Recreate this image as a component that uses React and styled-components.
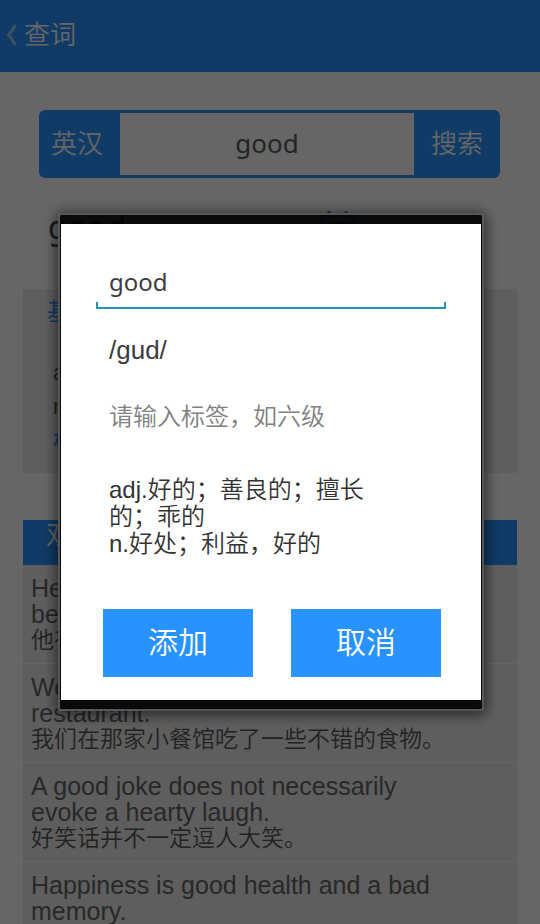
import React, { useState } from "react";
import styled, { createGlobalStyle } from "styled-components";

const BLUE = "#2893ff";
const HEI = '"Liberation Sans", "Noto Sans CJK SC", sans-serif';
const SANS = '"Noto Sans", "Noto Sans CJK SC", sans-serif';

const GlobalStyle = createGlobalStyle`
  * {
    box-sizing: border-box;
  }

  body {
    margin: 0;
    background: #fff;
    font-family: ${HEI};
    font-weight: 350;
    color: #333;
  }

  button, input, textarea {
    font: inherit;
    color: inherit;
    border: 0;
    border-radius: 0;
    background: none;
    padding: 0;
    outline: none;
  }
`;

const Page = styled.div`
  height: 100vh;
  overflow: hidden;
`;

const Header = styled.header`
  display: flex;
  align-items: center;
  height: 72px;
  padding: 0 6px 2px;
  background: ${BLUE};
  color: #fff;
`;

const BackButton = styled.button`
  display: flex;
  width: 18px;
  color: #a8c8e8;
`;

const Title = styled.h1`
  margin: 0;
  font-size: 26px;
  font-weight: 350;
  line-height: 36px;
`;

const SearchBar = styled.form`
  display: flex;
  height: 68px;
  margin: 38px 40px 0 39px;
  border: 3px solid ${BLUE};
  border-radius: 6px;
  background: ${BLUE};
`;

const SearchButton = styled.button`
  flex: none;
  width: ${(props) => props.$width};
  padding: 0 0 6px ${(props) => props.$indent};
  color: #fff;
  font-size: 26px;
  text-align: left;
`;

const SearchInput = styled.input`
  flex: 1;
  min-width: 0;
  padding-bottom: 2px;
  background: #fff;
  color: #5a5a5a;
  font-family: ${SANS};
  font-size: 26px;
  font-weight: 400;
  text-align: center;
`;

const WordRow = styled.div`
  display: flex;
  justify-content: space-between;
  align-items: flex-start;
  height: 80px;
  margin: 31px 184px 0 48px;
`;

const Word = styled.h2`
  margin: 0;
  color: #444;
  font-family: ${SANS};
  font-size: 32px;
  font-weight: 400;
  line-height: 36px;
`;

const Meaning = styled.section`
  height: 184px;
  margin: 0 23px;
  padding: 7px 24px;
  background: #ececec;
  font-size: 22px;
`;

const MeaningTitle = styled.h3`
  margin: 0 0 28px;
  color: ${BLUE};
  font-size: 24px;
  font-weight: 400;
  line-height: 32px;
`;

const MeaningLine = styled.p`
  margin: 0;
  padding-left: 6px;
  color: ${(props) => (props.$accent ? BLUE : "#555")};
  font-weight: ${(props) => (props.$accent ? 500 : 350)};
  line-height: 34px;
`;

const Examples = styled.section`
  margin: 47px 23px 0;
  background: #ececec;
`;

const ExamplesTitle = styled.h3`
  height: 45px;
  margin: 0;
  padding: 0 23px;
  background: ${BLUE};
  color: #fff;
  font-size: 26px;
  font-weight: 350;
  line-height: 30px;
`;

const ExampleList = styled.ul`
  margin: 0;
  padding: 0;
  list-style: none;
`;

const Example = styled.li`
  padding: 10px 57px 10px 8px;
  border-bottom: 1px solid #fff;
  line-height: 26px;
`;

const Sentence = styled.p`
  margin: 0;
  color: #646464;
  font-size: 25px;
`;

const Translation = styled.p`
  margin: 0;
  color: #555;
  font-size: 23px;
`;

const Backdrop = styled.div`
  position: fixed;
  inset: 0;
  display: flex;
  align-items: center;
  padding: 0 56px 0 58px;
  background: rgba(0, 0, 0, 0.6);
`;

const Dialog = styled.div`
  flex: 1;
  padding: 9px 1px;
  border: 2px solid #575757;
  border-radius: 3px;
  background: rgba(0, 0, 0, 0.9);
  background-clip: padding-box;
  box-shadow: 0 2px 14px 2px rgba(0, 0, 0, 0.6);
`;

const DialogForm = styled.form`
  display: flex;
  flex-direction: column;
  gap: 15px;
  padding: 33px 35px 23px;
  background: #fff;
`;

const Field = styled.input`
  width: 100%;
  height: 52px;
  padding: 0 13px;
  color: #3c3c3c;
  font-size: ${(props) => props.$size || "24px"};

  &::placeholder {
    color: #808080;
    opacity: 1;
  }
`;

// holo style text box, the line turns up at both ends
const ActiveField = styled(Field)`
  padding-bottom: 4px;
  font-family: ${SANS};
  font-weight: 400;
  background:
    linear-gradient(#1f96b4, #1f96b4) left bottom / 100% 2px no-repeat,
    linear-gradient(#1f96b4, #1f96b4) left bottom / 2px 7px no-repeat,
    linear-gradient(#1f96b4, #1f96b4) right bottom / 2px 7px no-repeat;
`;

const Definition = styled.textarea`
  display: block;
  width: 100%;
  height: 119px;
  padding: 18px 66px 20px 13px;
  overflow: hidden;
  resize: none;
  font-size: 24px;
  line-height: 27px;
`;

const Actions = styled.div`
  display: flex;
  gap: 38px;
  margin-top: 17px;
  padding: 0 5px 0 7px;
`;

const ActionButton = styled.button`
  flex: 1;
  height: 68px;
  padding-bottom: 6px;
  background: ${BLUE};
  color: #fff;
  font-size: 30px;
`;

const examples = [
  {
    en: "He has good manners and will never be rude to others.",
    zh: "他有礼貌，从不对人无礼。",
  },
  {
    en: "We had some good food at that little restaurant.",
    zh: "我们在那家小餐馆吃了一些不错的食物。",
  },
  {
    en: "A good joke does not necessarily evoke a hearty laugh.",
    zh: "好笑话并不一定逗人大笑。",
  },
  {
    en: "Happiness is good health and a bad memory.",
    zh: "幸福就是健康加上坏记性。",
  },
];

const BackIcon = () => (
  <svg width="12" height="22" viewBox="0 0 12 22" fill="none" stroke="currentColor" strokeWidth="3">
    <path d="M9.5 1 Q6 7 2.5 11 Q6 15 9.5 21" />
  </svg>
);

const CalendarIcon = () => (
  <svg width="36" height="36" viewBox="0 0 36 36" fill="none" stroke={BLUE} strokeWidth="3">
    <rect x="2" y="6" width="32" height="28" />
    <path d="M9 2v8M26 2v8M2 15h32" />
  </svg>
);

const App = () => {
  const [query, setQuery] = useState("good");
  const [word, setWord] = useState("good");
  const [phonetic, setPhonetic] = useState("/gud/");
  const [tag, setTag] = useState("");
  const [definition, setDefinition] = useState(
    "adj.好的；善良的；擅长的；乖的\nn.好处；利益，好的"
  );

  return (
    <>
      <GlobalStyle />
      <Page>
        <Header>
          <BackButton type="button" aria-label="返回">
            <BackIcon />
          </BackButton>
          <Title>查词</Title>
        </Header>

        <SearchBar onSubmit={(e) => e.preventDefault()}>
          <SearchButton type="button" $width="78px" $indent="9px">英汉</SearchButton>
          <SearchInput
            aria-label="单词"
            value={query}
            onChange={(e) => setQuery(e.target.value)}
          />
          <SearchButton type="submit" $width="83px" $indent="17px">搜索</SearchButton>
        </SearchBar>

        <WordRow>
          <Word>good</Word>
          <CalendarIcon />
        </WordRow>

        <Meaning>
          <MeaningTitle>基本释义</MeaningTitle>
          <MeaningLine>adj.好的；善良的</MeaningLine>
          <MeaningLine>n.好处；利益</MeaningLine>
          <MeaningLine $accent>相关单词</MeaningLine>
        </Meaning>

        <Examples>
          <ExamplesTitle>双语例句</ExamplesTitle>
          <ExampleList>
            {examples.map((item) => (
              <Example key={item.en}>
                <Sentence>{item.en}</Sentence>
                <Translation>{item.zh}</Translation>
              </Example>
            ))}
          </ExampleList>
        </Examples>
      </Page>

      {/* Add word dialog */}
      <Backdrop>
        <Dialog role="dialog" aria-modal="true" aria-label="添加单词">
          <DialogForm onSubmit={(e) => e.preventDefault()}>
            <ActiveField
              aria-label="单词"
              value={word}
              onChange={(e) => setWord(e.target.value)}
            />
            <Field
              $size="26px"
              aria-label="音标"
              value={phonetic}
              onChange={(e) => setPhonetic(e.target.value)}
            />
            <Field
              aria-label="标签"
              placeholder="请输入标签，如六级"
              value={tag}
              onChange={(e) => setTag(e.target.value)}
            />
            <Definition
              aria-label="释义"
              value={definition}
              onChange={(e) => setDefinition(e.target.value)}
            />
            <Actions>
              <ActionButton type="submit">添加</ActionButton>
              <ActionButton type="button">取消</ActionButton>
            </Actions>
          </DialogForm>
        </Dialog>
      </Backdrop>
    </>
  );
};

export default App;
